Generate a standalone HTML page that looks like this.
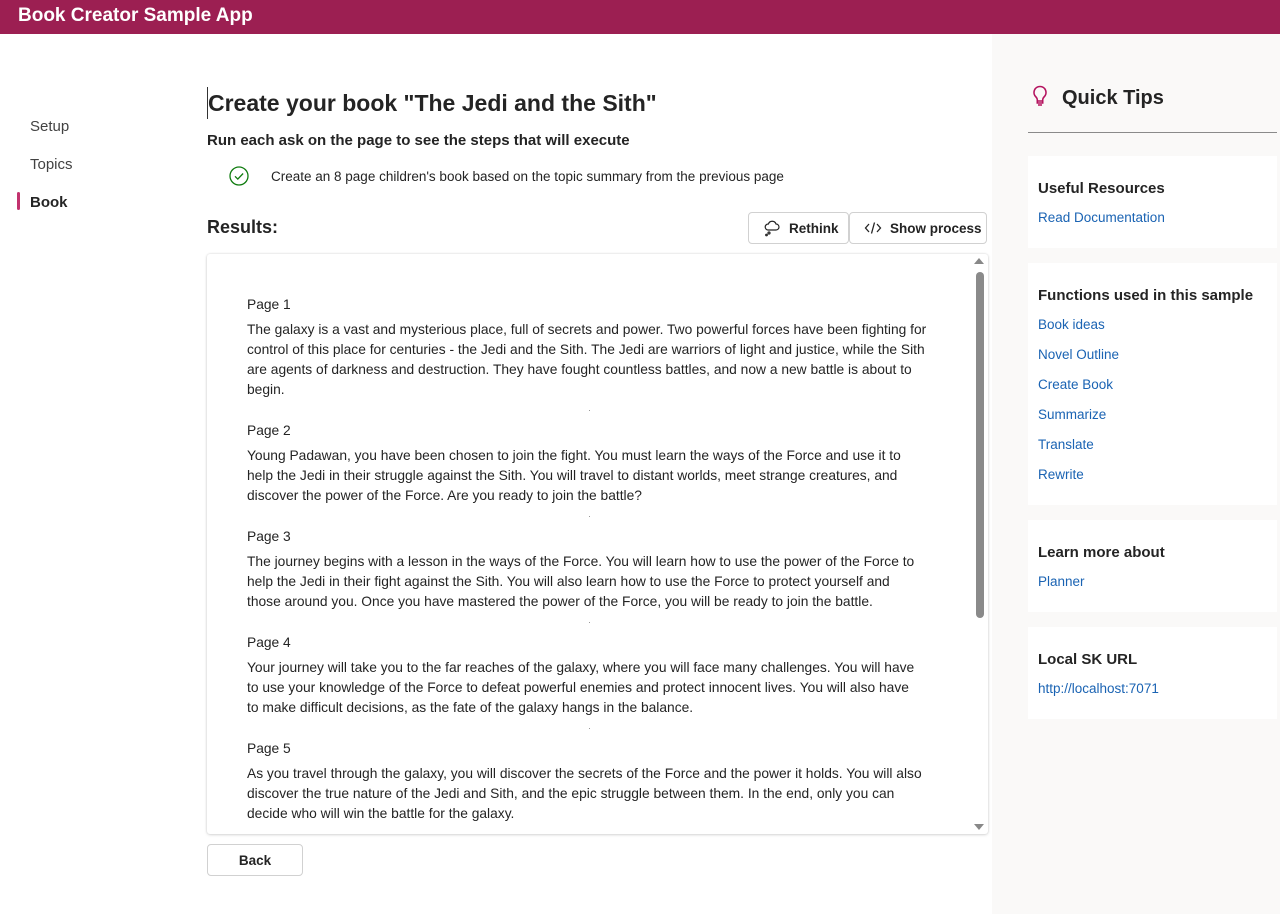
<!DOCTYPE html>
<html><head><meta charset="utf-8"><style>
*{box-sizing:border-box;margin:0;padding:0}
body{width:1280px;height:914px;overflow:hidden;font-family:"Liberation Sans",sans-serif;color:#242424;background:#fff;position:relative}
.hdr{position:absolute;left:0;top:0;width:1280px;height:34px;background:#9c1f52;color:#fff;font-size:19px;font-weight:bold;padding:5px 0 0 18px}
.nav{position:absolute;left:30px;font-size:15px;color:#424242}
.bar{position:absolute;left:17px;top:192px;width:3px;height:18px;background:#c2326e;border-radius:2px}
.right{position:absolute;left:992px;top:34px;width:288px;height:880px;background:#faf9f8}
.card{position:absolute;left:36px;width:249px;background:#fff;padding:0 10px}
.card h4{font-size:15px;font-weight:bold;color:#242424;margin-top:24px;margin-bottom:13px}
.card a{display:block;color:#1a63b3;font-size:13.5px;text-decoration:none;height:30px}
.btn{position:absolute;top:212px;height:32px;border:1px solid #d1d1d1;border-radius:4px;font-size:13.5px;font-weight:bold;display:flex;align-items:center;gap:8px;padding-left:14px;background:#fff}
.box{position:absolute;left:207px;top:254px;width:781px;height:580px;box-shadow:0 0 2px rgba(0,0,0,.15),0 1px 3px rgba(0,0,0,.12);border-radius:3px;overflow:hidden}
.pg{position:absolute;left:40px;font-size:13.8px;line-height:20px;white-space:nowrap}
.dot{position:absolute;left:382px;width:1px;height:1px;background:#999}
</style></head><body>
<div class="hdr">Book Creator Sample App</div>
<div class="nav" style="top:118px">Setup</div>
<div class="nav" style="top:156px">Topics</div>
<div class="nav" style="top:194px;color:#242424;font-weight:bold">Book</div>
<div class="bar"></div>
<div style="position:absolute;left:207px;top:87px;width:1px;height:32px;background:#333"></div>
<div style="position:absolute;left:208px;top:90px;font-size:23px;font-weight:bold;color:#242424">Create your book "The Jedi and the Sith"</div>
<div style="position:absolute;left:207px;top:132px;font-size:15px;font-weight:bold">Run each ask on the page to see the steps that will execute</div>
<svg style="position:absolute;left:229px;top:166px" width="20" height="20" viewBox="0 0 20 20"><circle cx="10" cy="10" r="9" fill="none" stroke="#107c10" stroke-width="1.3"/><path d="M6 10.3l2.8 2.8 5.3-5.6" fill="none" stroke="#107c10" stroke-width="1.3"/></svg>
<div style="position:absolute;left:271px;top:169px;font-size:13.5px">Create an 8 page children's book based on the topic summary from the previous page</div>
<div style="position:absolute;left:207px;top:217px;font-size:18px;font-weight:bold">Results:</div>
<div class="btn" style="left:748px;width:101px"><svg width="18" height="18" viewBox="0 0 18 18" fill="none" stroke="#242424" stroke-width="1.2"><path d="M5 11h8a3 3 0 0 0 0-6 4 4 0 0 0-7.6 0A3 3 0 0 0 5 11z"/><circle cx="6" cy="14" r="1"/><circle cx="3.5" cy="16" r=".8"/></svg>Rethink</div>
<div class="btn" style="left:849px;width:138px"><svg width="18" height="18" viewBox="0 0 18 18" fill="none" stroke="#242424" stroke-width="1.3"><path d="M5 5L1.5 9 5 13M13 5l3.5 4L13 13M10.5 3.5l-3 11"/></svg>Show process</div>
<div class="box">
<div style="position:absolute;right:4px;top:4px;width:0;height:0;border-left:5px solid transparent;border-right:5px solid transparent;border-bottom:6px solid #888"></div>
<div style="position:absolute;right:4px;top:18px;width:8px;height:346px;background:#8a8a8a;border-radius:4px"></div>
<div style="position:absolute;right:4px;bottom:4px;width:0;height:0;border-left:5px solid transparent;border-right:5px solid transparent;border-top:6px solid #888"></div>
<div class="pg" style="top:41px">Page 1</div>
<div class="pg" style="top:66px">The galaxy is a vast and mysterious place, full of secrets and power. Two powerful forces have been fighting for<br>control of this place for centuries - the Jedi and the Sith. The Jedi are warriors of light and justice, while the Sith<br>are agents of darkness and destruction. They have fought countless battles, and now a new battle is about to<br>begin.</div>
<div class="dot" style="top:156px"></div>
<div class="pg" style="top:167px">Page 2</div>
<div class="pg" style="top:192px">Young Padawan, you have been chosen to join the fight. You must learn the ways of the Force and use it to<br>help the Jedi in their struggle against the Sith. You will travel to distant worlds, meet strange creatures, and<br>discover the power of the Force. Are you ready to join the battle?</div>
<div class="dot" style="top:262px"></div>
<div class="pg" style="top:273px">Page 3</div>
<div class="pg" style="top:298px">The journey begins with a lesson in the ways of the Force. You will learn how to use the power of the Force to<br>help the Jedi in their fight against the Sith. You will also learn how to use the Force to protect yourself and<br>those around you. Once you have mastered the power of the Force, you will be ready to join the battle.</div>
<div class="dot" style="top:368px"></div>
<div class="pg" style="top:379px">Page 4</div>
<div class="pg" style="top:404px">Your journey will take you to the far reaches of the galaxy, where you will face many challenges. You will have<br>to use your knowledge of the Force to defeat powerful enemies and protect innocent lives. You will also have<br>to make difficult decisions, as the fate of the galaxy hangs in the balance.</div>
<div class="dot" style="top:474px"></div>
<div class="pg" style="top:485px">Page 5</div>
<div class="pg" style="top:510px">As you travel through the galaxy, you will discover the secrets of the Force and the power it holds. You will also<br>discover the true nature of the Jedi and Sith, and the epic struggle between them. In the end, only you can<br>decide who will win the battle for the galaxy.</div>
</div>
<div style="position:absolute;left:207px;top:844px;width:96px;height:32px;border:1px solid #d1d1d1;border-radius:4px;font-size:13.5px;font-weight:bold;text-align:center;line-height:31px">Back</div>
<div class="right">
<svg style="position:absolute;left:40px;top:51px" width="16" height="22" viewBox="0 0 16 22" fill="none" stroke="#b4135f" stroke-width="1.6"><path d="M8 1.5a6 6 0 0 0-4 10.5c1 1 1.3 2 1.3 3V18h5.4v-3c0-1 .3-2 1.3-3A6 6 0 0 0 8 1.5zM5.5 16h5M6 20h4"/></svg>
<div style="position:absolute;left:70px;top:53px;font-size:20px;font-weight:bold;color:#242424">Quick Tips</div>
<div style="position:absolute;left:36px;top:98px;width:249px;height:1px;background:#8a8a8a"></div>
<div class="card" style="top:122px;height:92px"><h4>Useful Resources</h4><a>Read Documentation</a></div>
<div class="card" style="top:229px;height:242px"><h4>Functions used in this sample</h4><a>Book ideas</a><a>Novel Outline</a><a>Create Book</a><a>Summarize</a><a>Translate</a><a>Rewrite</a></div>
<div class="card" style="top:486px;height:92px"><h4>Learn more about</h4><a>Planner</a></div>
<div class="card" style="top:593px;height:92px"><h4>Local SK URL</h4><a>http://localhost:7071</a></div>
</div>
</body></html>
